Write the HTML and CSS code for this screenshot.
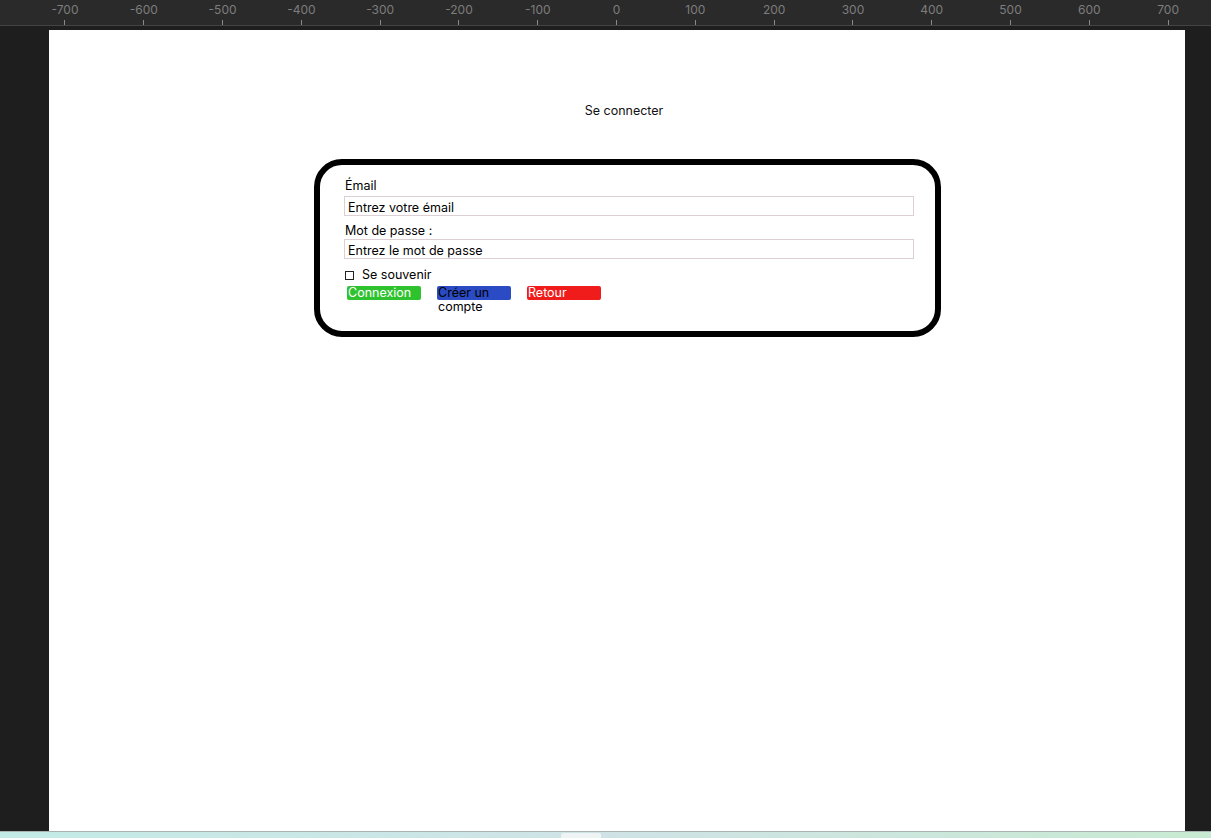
FILE: index.html
```html
<!DOCTYPE html>
<html lang="fr">
<head>
<meta charset="utf-8">
<title>Se connecter</title>
<link rel="stylesheet" href="styles.css">
</head>
<body>
<div class="ruler">
  <div class="mark"><span class="num">-700</span><span class="tick"></span></div>
  <div class="mark"><span class="num">-600</span><span class="tick"></span></div>
  <div class="mark"><span class="num">-500</span><span class="tick"></span></div>
  <div class="mark"><span class="num">-400</span><span class="tick"></span></div>
  <div class="mark"><span class="num">-300</span><span class="tick"></span></div>
  <div class="mark"><span class="num">-200</span><span class="tick"></span></div>
  <div class="mark"><span class="num">-100</span><span class="tick"></span></div>
  <div class="mark"><span class="num">0</span><span class="tick"></span></div>
  <div class="mark"><span class="num">100</span><span class="tick"></span></div>
  <div class="mark"><span class="num">200</span><span class="tick"></span></div>
  <div class="mark"><span class="num">300</span><span class="tick"></span></div>
  <div class="mark"><span class="num">400</span><span class="tick"></span></div>
  <div class="mark"><span class="num">500</span><span class="tick"></span></div>
  <div class="mark"><span class="num">600</span><span class="tick"></span></div>
  <div class="mark"><span class="num">700</span><span class="tick"></span></div>
</div>
<div class="stage">
  <div class="canvas">
    <div class="title">Se connecter</div>
    <form class="card">
      <label class="lbl" for="email">Émail</label>
      <input class="field" id="email" type="text" placeholder="Entrez votre émail">
      <label class="lbl lbl2" for="pwd">Mot de passe :</label>
      <input class="field" id="pwd" type="password" placeholder="Entrez le mot de passe">
      <div class="remember">
        <span class="box"></span>
        <span>Se souvenir</span>
      </div>
      <div class="actions">
        <div class="btn green">Connexion</div>
        <div class="btn blue">Créer un compte</div>
        <div class="btn red">Retour</div>
      </div>
    </form>
  </div>
</div>
<div class="footer"><span class="handle"></span></div>
</body>
</html>
```

FILE: styles.css
```css
* { box-sizing: border-box; }
html, body { margin: 0; padding: 0; }
body {
  background: #1e1e1e;
  font-family: Inter, "Noto Sans", "Liberation Sans", sans-serif;
  width: 1211px;
  height: 838px;
  overflow: hidden;
}
.ruler {
  height: 26px;
  background: #2a2a2a;
  border-bottom: 1px solid #444444;
  display: flex;
  padding-left: 25.6px;
}
.mark {
  width: 78.8px;
  display: flex;
  flex-direction: column;
  align-items: center;
}
.num {
  font-size: 12px;
  line-height: 14px;
  margin-top: 3px;
  color: #7d7d7d;
}
.tick {
  width: 1px;
  height: 5px;
  margin-top: 3px;
  background: #8a8a8a;
}
.stage {
  padding: 4px 0 0 49px;
  height: 805px;
}
.canvas {
  width: 1136px;
  height: 801px;
  background: #ffffff;
  padding-top: 73px;
}
.title {
  font-size: 12.5px;
  line-height: 16px;
  color: #111;
  display: flex;
  justify-content: center;
  margin-left: 14px;
}
.card {
  margin: 40px 0 0 265px;
  width: 627px;
  height: 178px;
  border: 6px solid #000;
  border-radius: 28px;
  padding: 13px 21px 0 24px;
  display: flex;
  flex-direction: column;
  align-items: flex-start;
  font-size: 12.5px;
  color: #000;
}
.lbl {
  display: block;
  line-height: 16px;
  padding-left: 1px;
}
.lbl2 { margin-top: 7px; }
.field {
  display: block;
  width: 570px;
  height: 20px;
  margin-top: 2px;
  border: 1px solid #ddd0d4;
  padding: 2px 3px 0;
  font: 12.5px Inter, "Noto Sans", sans-serif;
  color: #000;
  outline: none;
}
.lbl2 + .field { margin-top: 0; }
.field::placeholder { color: #000; opacity: 1; }
.remember {
  margin-top: 8px;
  display: flex;
  align-items: center;
  gap: 8px;
  line-height: 16px;
  padding-left: 1px;
}
.box {
  width: 9px;
  height: 9px;
  border: 1px solid #222;
  background: #fff;
}
.actions {
  margin: 3px 0 0 3px;
  display: flex;
  gap: 16px;
}
.btn {
  width: 74px;
  height: 14px;
  border-radius: 2px;
  font-size: 12.5px;
  line-height: 14px;
  padding: 0 1px;
  overflow: visible;
}
.green { background: #2fc22f; color: #fff; }
.blue { background: #2a4bc4; color: #000; }
.red { background: #f01c1c; color: #fff; }
.footer {
  height: 7px;
  border-top: 1px solid #a9b3b0;
  background: linear-gradient(90deg, #c3ebe6, #cfe3e6 50%, #c8ead2);
  display: flex;
  justify-content: center;
}
.handle {
  width: 40px;
  height: 6px;
  margin-left: -50px;
  margin-top: 1px;
  background: #eef3f3;
  border-radius: 2px 2px 0 0;
}
```
